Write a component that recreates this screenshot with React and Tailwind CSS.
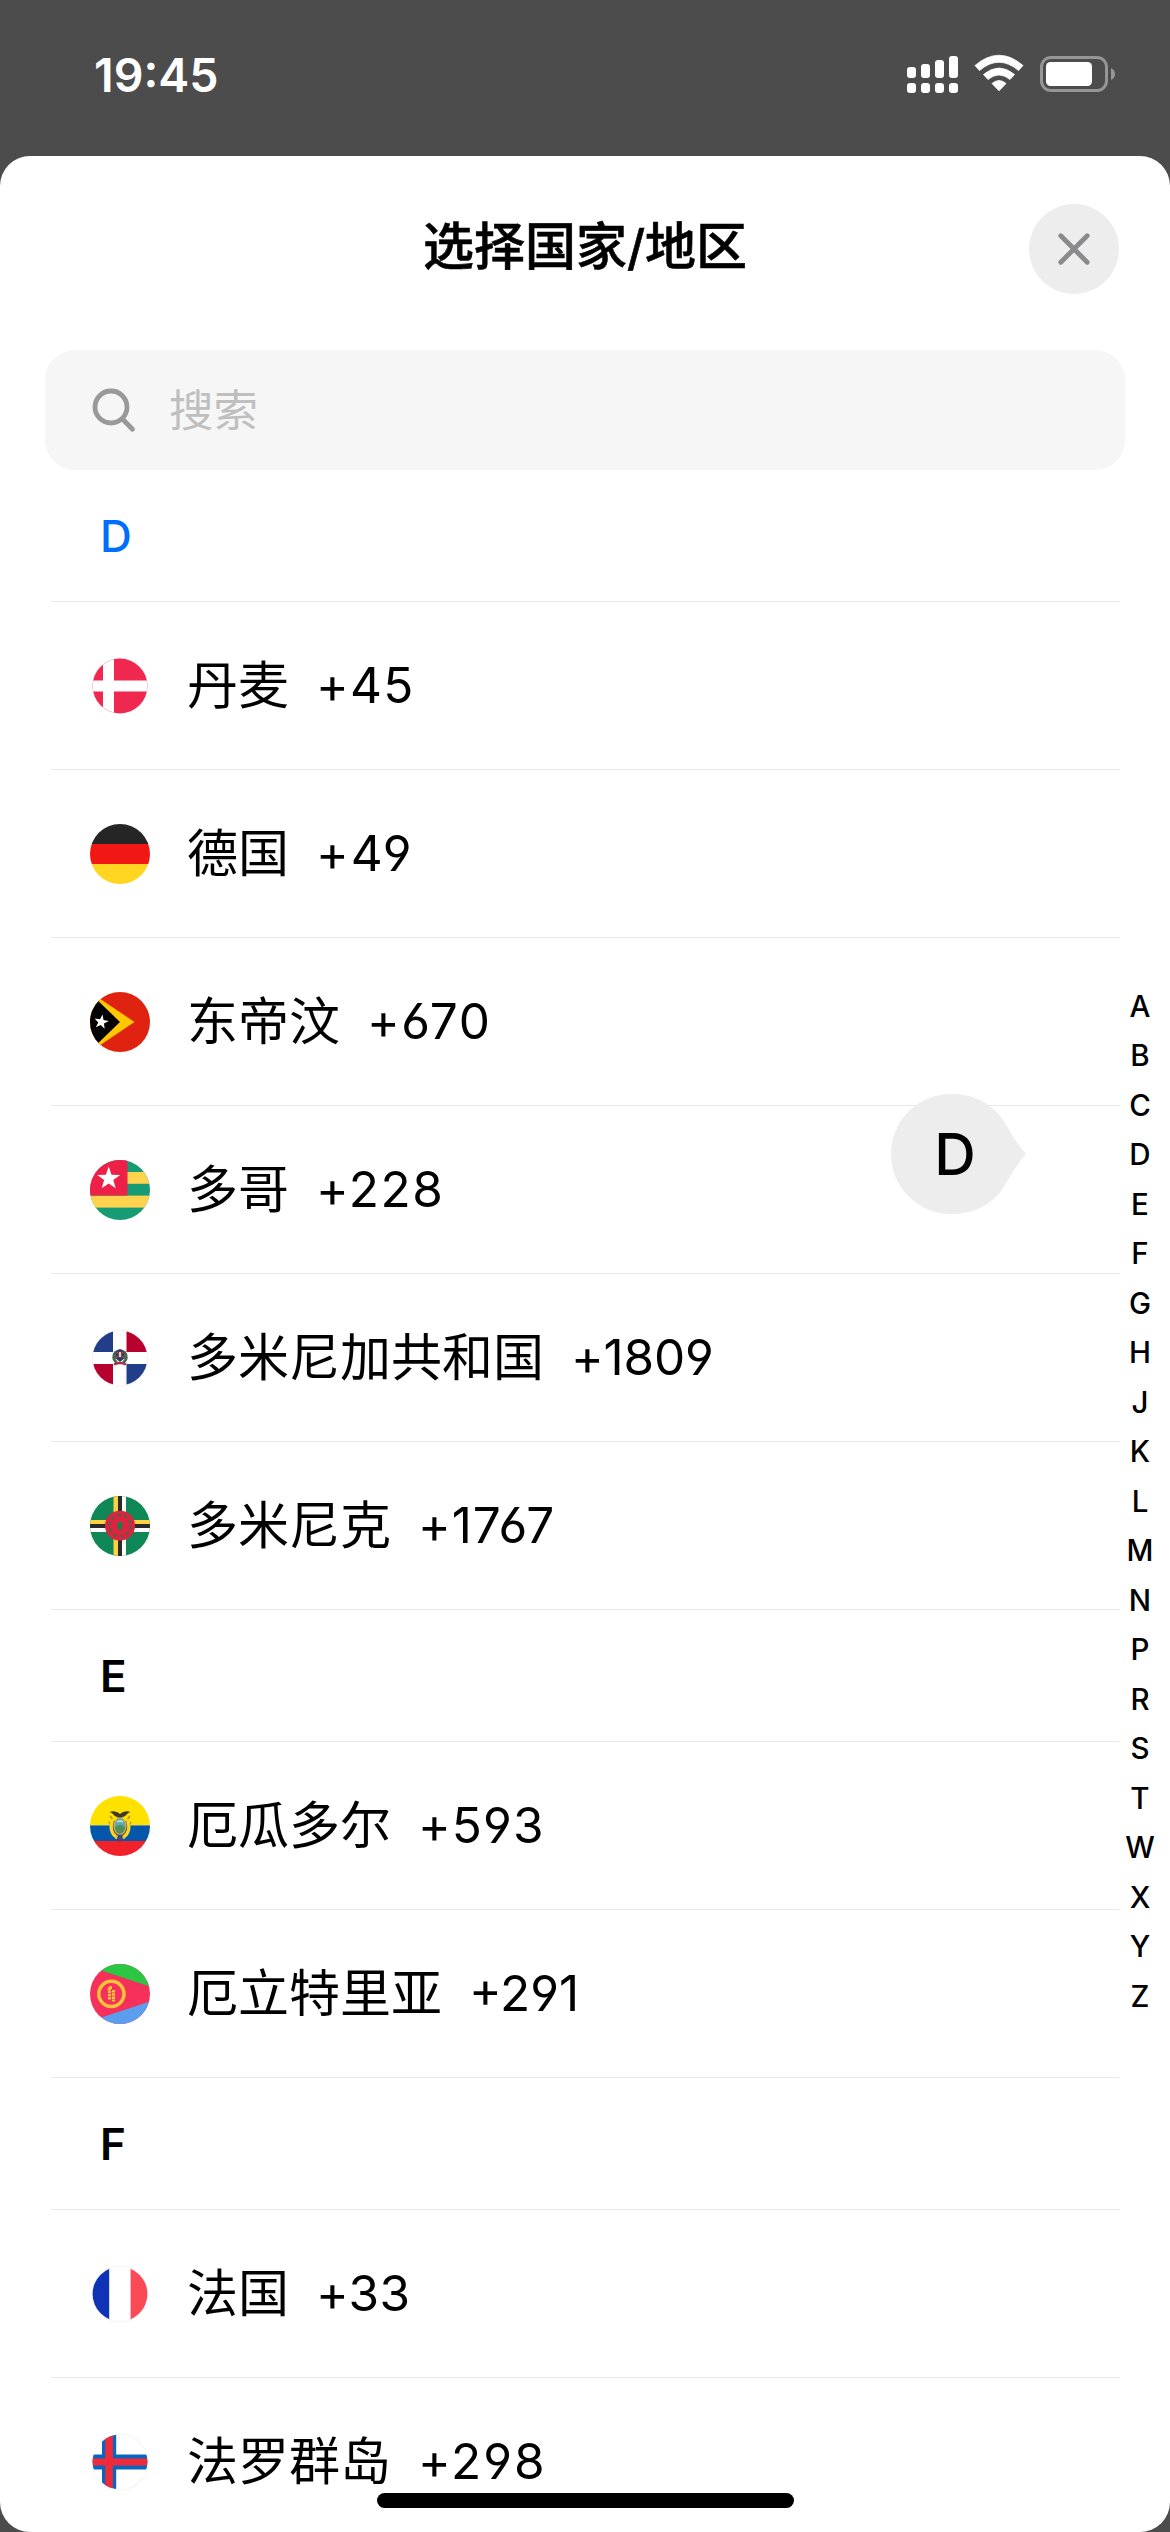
import React from "react";

const latin = "font-['Inter','Noto_Sans_CJK_SC',sans-serif]";
const hanzi = "font-['Noto_Sans_CJK_SC',sans-serif]";

function star(cx, cy, r, rot = 0) {
  return Array.from({ length: 10 }, (_, i) => {
    const a = ((i * 36 - 90 + rot) * Math.PI) / 180;
    const q = i % 2 ? r * 0.4 : r;
    return `${(cx + q * Math.cos(a)).toFixed(2)},${(cy + q * Math.sin(a)).toFixed(2)}`;
  }).join(" ");
}

const FLAGS = {
  dk: {
    inset: true,
    art: (
      <>
        <rect width="60" height="60" fill="#f0274f" />
        <rect x="13" width="11" height="60" fill="#fff" />
        <rect y="24.5" width="60" height="11" fill="#fff" />
      </>
    ),
  },
  de: {
    art: (
      <>
        <rect width="60" height="20" fill="#252525" />
        <rect y="20" width="60" height="20" fill="#f01715" />
        <rect y="40" width="60" height="20" fill="#ffd522" />
      </>
    ),
  },
  tl: {
    art: (
      <>
        <rect width="60" height="60" fill="#df2310" />
        <path d="M0 0L44.5 30L0 60Z" fill="#ffc800" />
        <path d="M0 1L30 30L0 59Z" fill="#000" />
        <polygon points={star(11.3, 30, 7.6, 10)} fill="#fff" />
      </>
    ),
  },
  tg: {
    art: (
      <>
        <rect width="60" height="60" fill="#179b74" />
        <rect y="12" width="60" height="11.8" fill="#ffd34e" />
        <rect y="35.6" width="60" height="12" fill="#ffd34e" />
        <rect width="37.5" height="35.6" fill="#ee2048" />
        <polygon points={star(18.7, 18.6, 12)} fill="#fff" />
      </>
    ),
  },
  do: {
    inset: true,
    art: (
      <>
        <rect width="60" height="60" fill="#fff" />
        <path d="M0 0H23V24H0ZM36.5 36H60V60H36.5Z" fill="#233e88" />
        <path d="M36.5 0H60V24H36.5ZM0 36H23V60H0Z" fill="#b8002f" />
        <path d="M26 23.5C22.5 27.5 23 32 27 34.5M34 23.5C37.5 27.5 37 32 33 34.5" fill="none" stroke="#42684f" strokeWidth="2.8" />
        <path d="M26 22.5L30 21L34 22.5L35 30L30 34L25 30Z" fill="#343b60" />
        <path d="M26 23.5L34 30M34 23.5L26 30" stroke="#a8404c" strokeWidth="1.5" />
        <path d="M29 24H31V29H29Z" fill="#d9d7b4" />
        <path d="M24 36.5Q30 33.5 36 36.5" fill="none" stroke="#a52f42" strokeWidth="2.4" />
      </>
    ),
  },
  dm: {
    art: (
      <>
        <rect width="60" height="60" fill="#108756" />
        <rect x="23.5" width="4.5" height="60" fill="#ffd23f" />
        <rect x="28" width="4" height="60" fill="#2a2a2a" />
        <rect x="32" width="4" height="60" fill="#fff" />
        <rect y="24" width="60" height="4" fill="#ffd23f" />
        <rect y="28" width="60" height="4" fill="#2a2a2a" />
        <rect y="32" width="60" height="4" fill="#fff" />
        <circle cx="30" cy="29.7" r="15" fill="#dc2340" />
        <circle cx="30" cy="29.7" r="10.6" fill="none" stroke="#4d6540" strokeWidth="2.3" strokeDasharray="3.4 3.26" />
        <ellipse cx="30" cy="29.7" rx="2.3" ry="4.2" fill="#14804c" />
      </>
    ),
  },
  ec: {
    art: (
      <>
        <rect width="60" height="29.4" fill="#ffe100" />
        <rect y="29.4" width="60" height="15.6" fill="#0456ab" />
        <rect y="45" width="60" height="15" fill="#f02129" />
        <path d="M22.5 23L20 20M21.5 32L19 26M37.5 23L40 20M38.5 32L41 26" stroke="#a58d2c" strokeWidth="1.2" />
        <path d="M22.5 24C19.5 31 21.5 38 26.5 41M37.5 24C40.5 31 38.5 38 33.5 41" fill="none" stroke="#f5d91c" strokeWidth="3.2" />
        <path d="M24.5 25C22.5 31 24.5 37 28 39.5M35.5 25C37.5 31 35.5 37 32 39.5" fill="none" stroke="#b4483a" strokeWidth="1.6" />
        <ellipse cx="30" cy="30" rx="5.8" ry="8.2" fill="#5aa9b4" stroke="#c8b44a" strokeWidth="1.2" />
        <path d="M25 31Q30 27 35 31Q34.5 37 30 37.8Q25.5 37 25 31Z" fill="#4f8f5b" />
        <path d="M27 26Q30 24 33 26" fill="none" stroke="#d5e5d0" strokeWidth="1.5" />
        <path d="M19.5 16C23 14.5 27 15.5 30 18C33 15.5 37 14.5 40.5 16C38 17 36.5 18.5 35 20L32 21.5H28L25 20C23.5 18.5 22 17 19.5 16Z" fill="#40382b" />
        <path d="M30 39V46" stroke="#9c2b35" strokeWidth="1.8" />
        <path d="M27 40L26 43M33 40L34 43" stroke="#dccb32" strokeWidth="1.8" />
      </>
    ),
  },
  er: {
    art: (
      <>
        <rect width="60" height="60" fill="#f5305a" />
        <path d="M-8 0H60V22.4Z" fill="#2bc643" />
        <path d="M-8 60H60V37.4Z" fill="#5b9eee" />
        <circle cx="21.4" cy="29.8" r="12.6" fill="none" stroke="#ffc23a" strokeWidth="3.5" />
        <path d="M19.5 26.5V35.5M23.5 26V37.5" stroke="#ffc23a" strokeWidth="3.2" strokeDasharray="2.6 0.6" />
        <path d="M19 26Q19 23.5 22 23.5" fill="none" stroke="#ffc23a" strokeWidth="3" />
      </>
    ),
  },
  fr: {
    inset: true,
    art: (
      <>
        <rect width="60" height="60" fill="#fff" />
        <rect width="19.2" height="60" fill="#1033b5" />
        <rect x="40.6" width="20" height="60" fill="#f94a56" />
      </>
    ),
  },
  fo: {
    inset: true,
    art: (
      <>
        <rect width="60" height="60" fill="#fff" />
        <path d="M12 0H26.2V60H12ZM0 22.5H60V37.5H0Z" fill="#0a66bd" />
        <path d="M15.3 0H22.9V60H15.3ZM0 26.6H60V33.4H0Z" fill="#ef2b3b" />
      </>
    ),
  },
};

function Flag({ code }) {
  const { inset, art } = FLAGS[code];
  const r = inset ? 27.4 : 30;
  return (
    <svg className="size-[60px] shrink-0" viewBox="0 0 60 60">
      <clipPath id={`flag-${code}`}>
        <circle cx="30" cy="30" r={r} />
      </clipPath>
      {inset && <circle cx="30" cy="30" r="28.2" fill="#f1f1f1" />}
      <g clipPath={`url(#flag-${code})`}>{art}</g>
    </svg>
  );
}

// [flag, name, dialling code, tracking in px]
const SECTIONS = [
  {
    letter: "D",
    active: true,
    items: [
      ["dk", "丹麦", "+45", 1.2],
      ["de", "德国", "+49", 2],
      ["tl", "东帝汶", "+670", 1.6],
      ["tg", "多哥", "+228", 1.6],
      ["do", "多米尼加共和国", "+1809", -0.2],
      ["dm", "多米尼克", "+1767", 0.9],
    ],
  },
  {
    letter: "E",
    items: [
      ["ec", "厄瓜多尔", "+593", 1.1],
      ["er", "厄立特里亚", "+291", 0],
    ],
  },
  {
    letter: "F",
    items: [
      ["fr", "法国", "+33", 0.4],
      ["fo", "法罗群岛", "+298", 2],
    ],
  },
];

const INDEX = "ABCDEFGHJKLMNPRSTWXYZ".split("");

function StatusBar() {
  return (
    <div className="flex h-[156px] items-start justify-between pl-[94px] pr-[54px] text-white">
      <span className={`${latin} mt-[47px] text-[46.5px] leading-[56px] font-semibold`}>19:45</span>
      <svg className="mt-[50px] h-[48px] w-[210px]" viewBox="906 50 210 48" fill="#fff">
        <rect x="907" y="67" width="9" height="11" rx="3" />
        <rect x="921" y="64" width="9" height="14" rx="3" />
        <rect x="935" y="60" width="9" height="18" rx="3" />
        <rect x="949" y="56" width="9" height="22" rx="3" />
        <rect x="907" y="83" width="9" height="10" rx="3" />
        <rect x="921" y="83" width="9" height="10" rx="3" />
        <rect x="935" y="83" width="9" height="10" rx="3" />
        <rect x="949" y="83" width="9" height="10" rx="3" />
        <path d="M975 65.5Q999 45 1023 65.5L1018.5 70.5Q999 54 979.5 70.5Z" stroke="#fff" strokeWidth="0.8" strokeLinejoin="round" />
        <path d="M983.5 74.5Q999 61.5 1014.5 74.5L1010 79.5Q999 70.5 988 79.5Z" stroke="#fff" strokeWidth="0.8" strokeLinejoin="round" />
        <path d="M992 83.5Q999 77.5 1006 83.5L999 90.8Z" stroke="#fff" strokeWidth="0.8" strokeLinejoin="round" />
        <rect x="1041.5" y="57.5" width="65" height="33" rx="9.5" fill="none" stroke="#969696" strokeWidth="3" />
        <rect x="1046" y="62" width="46" height="24" rx="4.5" />
        <path d="M1111 68Q1115 70 1115 74T1111 80Z" fill="#969696" />
      </svg>
    </div>
  );
}

function Header() {
  return (
    <header className="flex h-[194px] items-start justify-between pr-[51px] pl-[51px] pt-[48px]">
      <div className="w-[90px]" />
      <h1 className={`${hanzi} mt-[2px] text-[51px] leading-[74px] font-medium text-black [-webkit-text-stroke:0.6px_black]`}>
        选择国家<span className={`${latin} text-[49px]`}>/</span>地区
      </h1>
      <button className="flex size-[90px] items-center justify-center rounded-full bg-[#ededed]">
        <svg className="size-[34px]" viewBox="0 0 34 34" stroke="#8a8a8d" strokeWidth="4.8" strokeLinecap="round">
          <path d="M3.8 3.8L30.2 30.2M30.2 3.8L3.8 30.2" />
        </svg>
      </button>
    </header>
  );
}

function SearchField() {
  return (
    <div className="mx-[45px] flex h-[120px] items-center rounded-[30px] bg-[#f6f6f6] pl-[46px]">
      <svg className="size-[46px]" viewBox="0 0 46 46" fill="none" stroke="#999" strokeWidth="4.8" strokeLinecap="round">
        <circle cx="20" cy="20" r="16" />
        <path d="M32 32.5L41.5 42.2" />
      </svg>
      <span className={`${hanzi} -mt-[4px] ml-[32px] text-[44.5px] leading-[64px] text-[#bfbfbf]`}>搜索</span>
    </div>
  );
}

function Section({ letter, active, items }) {
  return (
    <section>
      <h2
        className={`${latin} flex h-[132px] items-center border-b border-[#e9e9e9] pl-[49px] text-[44px] ${
          active ? "font-medium text-[#006dfb]" : "font-semibold text-black"
        }`}
      >
        {letter}
      </h2>
      {items.map(([flag, name, code, tracking]) => (
        <div key={flag} className="flex h-[168px] items-center border-b border-[#e9e9e9] pl-[39px] text-black">
          <Flag code={flag} />
          <span className={`${hanzi} -mt-[8px] ml-[37px] text-[51px] leading-[74px] font-normal`}>{name}</span>
          <span
            className={`${latin} -mt-[2px] ml-[27px] text-[49.5px] leading-[60px] font-normal [font-feature-settings:'cv03','cv04']`}
            style={{ letterSpacing: `${tracking}px` }}
          >
            {code}
          </span>
        </div>
      ))}
    </section>
  );
}

function LetterBubble() {
  return (
    <div className="absolute top-[1094px] left-[891px] h-[120px] w-[136px]">
      <svg className="absolute inset-0" width="136" height="120" viewBox="0 0 136 120">
        <path d="M60 0C82 0 101 9 112 26C119 37 125 49 135 60C125 71 119 83 112 94C101 111 82 120 60 120A60 60 0 0 1 60 0Z" fill="#ededed" />
      </svg>
      <span className={`${latin} absolute top-0 left-0 w-[128px] text-center text-[57.5px] leading-[120px] font-medium text-black`}>D</span>
    </div>
  );
}

function IndexBar() {
  return (
    <nav className={`${latin} absolute top-[981.5px] right-0 flex w-[60px] flex-col text-center text-[29.5px] font-medium text-black`}>
      {INDEX.map((l) => (
        <span key={l} className="h-[49.5px] leading-[49.5px]">
          {l}
        </span>
      ))}
    </nav>
  );
}

export default function App() {
  return (
    <div className="relative h-[2532px] w-[1170px] overflow-hidden bg-[#4c4c4c]">
      <StatusBar />
      <main className="h-[2376px] overflow-hidden rounded-[30px] bg-white">
        <Header />
        <SearchField />
        <div className="mx-[51px]">
          {SECTIONS.map((s) => (
            <Section key={s.letter} {...s} />
          ))}
        </div>
      </main>
      <LetterBubble />
      <IndexBar />
      <div className="absolute top-[2493px] left-[377px] h-[15px] w-[417px] rounded-full bg-black" />
    </div>
  );
}
